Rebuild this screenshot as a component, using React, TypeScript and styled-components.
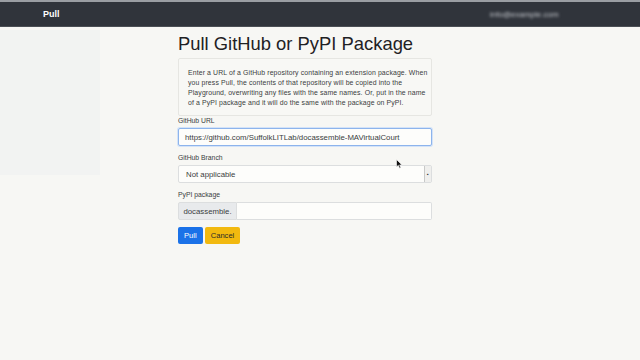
import React from "react";
import styled, { createGlobalStyle } from "styled-components";

const Global = createGlobalStyle`
  html, body { margin: 0; padding: 0; }
  body {
    background: #f7f7f4;
    font-family: "Liberation Sans", Arial, sans-serif;
    color: #212529;
    width: 640px;
    height: 360px;
    overflow: hidden;
  }
`;

const TopLine = styled.div`
  height: 2px;
  background: #9a9ea3;
`;

const Navbar = styled.nav`
  height: 24px;
  background: #30343b;
  border-bottom: 1px solid #4b4f55;
  display: flex;
  align-items: center;
  justify-content: space-between;
  padding: 0 78px 0 43px;
`;

const Brand = styled.span`
  color: #ffffff;
  font-size: 9px;
  font-weight: 600;
`;

const Email = styled.span`
  color: #c8cbd0;
  font-size: 8px;
  filter: blur(1.4px);
  width: 72px;
`;

const Body = styled.div`
  display: flex;
  align-items: flex-start;
  position: relative;
`;

const Sidebar = styled.div`
  width: 100px;
  height: 145px;
  margin-top: 3px;
  background: #f2f3f2;
  flex-shrink: 0;
`;

const Main = styled.main`
  margin-left: 78px;
  width: 254px;
  display: flex;
  flex-direction: column;
`;

const Title = styled.h1`
  margin: 5px 0 0 0;
  font-size: 18.4px;
  line-height: 24px;
  font-weight: 500;
  color: #1f2124;
  white-space: nowrap;
`;

const Info = styled.div`
  margin-top: 2px;
  border: 1px solid #e6e6e2;
  border-radius: 2px;
  background: #f8f8f5;
  padding: 9px 6px 7px 9px;
  font-size: 6.9px;
  letter-spacing: 0.12px;
  line-height: 10px;
  color: #3a3d40;
  white-space: nowrap;
`;

const Label = styled.label<{ $top: number }>`
  display: block;
  font-size: 6.8px;
  line-height: 8px;
  color: #3a3d40;
  margin: ${(p) => p.$top}px 0 3px 0;
`;

const TextInput = styled.div<{ $focus?: boolean }>`
  height: 18px;
  box-sizing: border-box;
  border: 1px solid ${(p) => (p.$focus ? "#8db4ec" : "#dcdedf")};
  box-shadow: ${(p) => (p.$focus ? "0 0 0 1px #d4e3f8" : "none")};
  border-radius: 2px;
  background: #fdfdfb;
  display: flex;
  align-items: center;
  padding-left: 6px;
  font-size: 7.8px;
  color: #3a3d40;
  white-space: nowrap;
`;

const Select = styled.div`
  height: 18px;
  box-sizing: border-box;
  border: 1px solid #dcdedf;
  border-radius: 2px;
  background: #fdfdfb;
  display: flex;
  align-items: center;
  justify-content: space-between;
  padding-left: 7px;
  font-size: 7.8px;
  color: #3a3d40;
`;

const SelectArrow = styled.div`
  width: 6px;
  height: 16px;
  border-left: 1px solid #c8c9c8;
  background: #efefed;
  display: flex;
  align-items: center;
  justify-content: center;
  font-size: 5px;
  color: #333;
`;

const Group = styled.div`
  height: 18px;
  display: flex;
  box-sizing: border-box;
`;

const Prepend = styled.div`
  width: 59px;
  box-sizing: border-box;
  border: 1px solid #dcdedf;
  border-radius: 2px 0 0 2px;
  background: #e8eaec;
  display: flex;
  align-items: center;
  justify-content: center;
  font-size: 7.8px;
  color: #3a3d40;
`;

const GroupInput = styled.div`
  flex: 1;
  border: 1px solid #dcdedf;
  border-left: none;
  border-radius: 0 2px 2px 0;
  background: #fdfdfb;
`;

const Buttons = styled.div`
  display: flex;
  gap: 2px;
  margin-top: 7px;
`;

const Button = styled.button<{ $variant: "primary" | "warning" }>`
  height: 17px;
  padding: 0 6px;
  border: none;
  border-radius: 2px;
  font-family: inherit;
  font-size: 7.6px;
  background: ${(p) => (p.$variant === "primary" ? "#1b72e8" : "#f2b90f")};
  color: ${(p) => (p.$variant === "primary" ? "#ffffff" : "#2a2a2a")};
`;

const Cursor = styled.svg`
  position: absolute;
  left: 396px;
  top: 132px;
`;

export default function App() {
  return (
    <>
      <Global />
      <TopLine />
      <Navbar>
        <Brand>Pull</Brand>
        <Email>info@example.com</Email>
      </Navbar>
      <Body>
        <Sidebar />
        <Main>
          <Title>Pull GitHub or PyPI Package</Title>
          <Info>
            Enter a URL of a GitHub repository containing an extension package. When
            <br />
            you press Pull, the contents of that repository will be copied into the
            <br />
            Playground, overwriting any files with the same names. Or, put in the name
            <br />
            of a PyPI package and it will do the same with the package on PyPI.
          </Info>
          <Label $top={1}>GitHub URL</Label>
          <TextInput $focus>https://github.com/SuffolkLITLab/docassemble-MAVirtualCourt</TextInput>
          <Label $top={8}>GitHub Branch</Label>
          <Select>
            Not applicable
            <SelectArrow>▪</SelectArrow>
          </Select>
          <Label $top={8}>PyPI package</Label>
          <Group>
            <Prepend>docassemble.</Prepend>
            <GroupInput />
          </Group>
          <Buttons>
            <Button $variant="primary">Pull</Button>
            <Button $variant="warning">Cancel</Button>
          </Buttons>
        </Main>
        <Cursor width="7" height="10" viewBox="0 0 7 10">
          <path d="M0.5 0.5 L0.5 8 L2.3 6.3 L3.6 9.3 L4.8 8.8 L3.6 5.9 L6 5.9 Z" fill="#111" stroke="#fff" strokeWidth="0.6" />
        </Cursor>
      </Body>
    </>
  );
}
